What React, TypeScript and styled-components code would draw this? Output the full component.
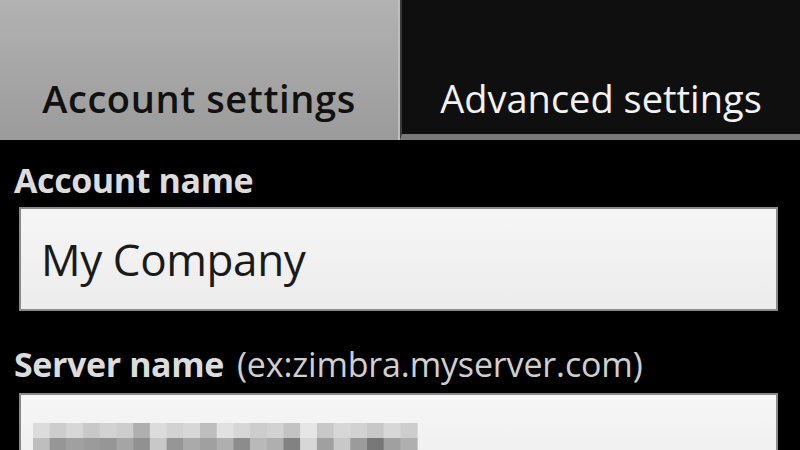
import React from "react";
import styled, { createGlobalStyle } from "styled-components";

const Global = createGlobalStyle`
  html, body { margin: 0; padding: 0; background: #000; }
  body { width: 800px; height: 450px; overflow: hidden; font-family: "Open Sans", "DejaVu Sans", sans-serif; }
`;

const Screen = styled.div`
  width: 800px;
  height: 450px;
  overflow: hidden;
  background: #000;
  display: flex;
  flex-direction: column;
`;

const TabBar = styled.div`
  display: flex;
  height: 140px;
  flex: 0 0 140px;
`;

const Tab = styled.div<{ $active?: boolean }>`
  box-sizing: border-box;
  display: flex;
  align-items: flex-end;
  justify-content: center;
  font-size: 38px;
  line-height: 1;
  white-space: nowrap;
  ${(p) =>
    p.$active
      ? `
    flex: 0 0 400px;
    background: linear-gradient(#b2b2b2, #9b9b9b);
    color: #111;
    font-weight: 600;
    letter-spacing: 0.6px;
    padding-bottom: 23px;
    border-right: 2px solid #bdbdbd;
  `
      : `
    flex: 1;
    background: #0f0f0f;
    color: #f2f2f2;
    font-weight: 400;
    letter-spacing: 0;
    padding-bottom: 17px;
    border-left: 2px solid #3a3a3a;
    border-bottom: 6px solid #7a7a7a;
  `}
`;

const Form = styled.div`
  display: flex;
  flex-direction: column;
  padding: 19px 22px 0 19px;
`;

const Label = styled.div`
  color: #dcdcdc;
  font-size: 34px;
  line-height: 42px;
  margin-left: -5px;
  white-space: nowrap;
`;

const Strong = styled.span`
  font-weight: 700;
  letter-spacing: -0.4px;
`;

const Hint = styled.span`
  font-weight: 400;
  margin-left: 13px;
  letter-spacing: -0.15px;
  color: #cfcfcf;
`;

const Field = styled.div<{ $mt?: number; $mb?: number }>`
  box-sizing: border-box;
  height: 104px;
  margin-top: ${(p) => p.$mt ?? 6}px;
  margin-bottom: ${(p) => p.$mb ?? 0}px;
  background: linear-gradient(#f6f6f6, #ececec);
  border: 2px solid #8a8a8a;
  display: flex;
  align-items: center;
  padding-left: 20px;
  color: #1a1a1a;
  font-size: 44px;
  letter-spacing: -0.4px;
`;

const BlurField = styled(Field)`
  align-items: flex-start;
  padding-left: 12px;
  padding-top: 28px;
`;

const greys1 = [220, 205, 215, 200, 210, 205, 175, 220, 210, 215, 190, 225, 215, 205, 210, 195, 230, 200, 215, 210, 200, 215, 205];
const greys2 = [190, 150, 160, 155, 150, 165, 145, 200, 150, 170, 160, 175, 140, 185, 175, 130, 215, 160, 200, 155, 120, 160, 175];

function Pixelated() {
  const w = 16.7;
  return (
    <svg width="390" height="40" viewBox="0 0 390 40">
      {greys1.map((g, i) => (
        <rect key={"a" + i} x={i * w} y={0} width={w + 0.5} height={15} fill={`rgb(${g},${g},${g})`} />
      ))}
      {greys2.map((g, i) => (
        <rect key={"b" + i} x={i * w} y={15} width={w + 0.5} height={25} fill={`rgb(${g},${g},${g})`} />
      ))}
    </svg>
  );
}

export default function App() {
  return (
    <Screen>
      <Global />
      <TabBar>
        <Tab $active>Account settings</Tab>
        <Tab>Advanced settings</Tab>
      </TabBar>
      <Form>
        <Label>
          <Strong>Account name</Strong>
        </Label>
        <Field $mb={32}>My Company</Field>
        <Label>
          <Strong>Server name</Strong>
          <Hint>(ex:zimbra.myserver.com)</Hint>
        </Label>
        <BlurField $mt={8}>
          <Pixelated />
        </BlurField>
      </Form>
    </Screen>
  );
}
